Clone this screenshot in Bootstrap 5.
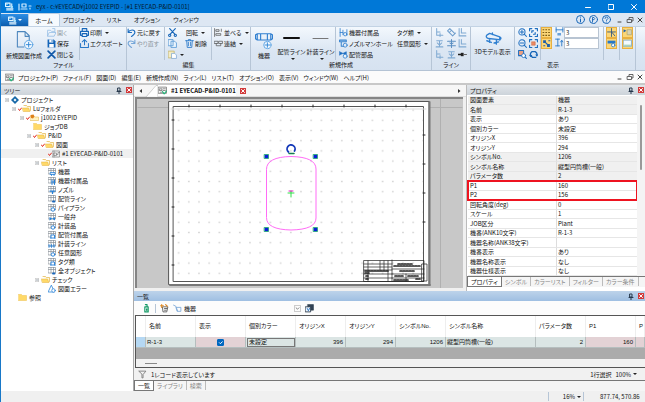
<!DOCTYPE html>
<html lang="ja">
<head>
<meta charset="utf-8">
<meta name="viewport" content="width=device-width, initial-scale=1">
<title>eyx - EYECAD-P&amp;ID-0101</title>
<link href="https://cdn.jsdelivr.net/npm/bootstrap@5.3.0/dist/css/bootstrap.min.css" rel="stylesheet">
<style>
body{font-family:"Noto Sans CJK JP",sans-serif;font-feature-settings:"palt";font-size:7px;line-height:9px;color:#111;background:#f0f0f0;white-space:nowrap;overflow-x:hidden}
button,input,select{font:inherit;font-feature-settings:inherit;color:inherit}
.app{min-height:100vh;border-left:1px solid #1878c8}
.f6{font-size:6px}
svg{flex:none;fill:none;stroke-linecap:round;stroke-linejoin:round}
.ic{width:9px;height:9px}
.ttl{background:#0078d7;height:13px;color:#06182c}
.wbtn{background:none;border:0;padding:0;width:23px;height:13px;color:#fff;display:flex;align-items:center;justify-content:center}
.mini{width:10px;color:#444}
.tabrow{background:#dde7f3;height:13px}
.tabrow .nav-link{padding:0;border:0;border-radius:0;height:13px;line-height:14px;color:#111;text-align:center}
.tabrow .nav-link.active{background:#f6fafe;border:1px solid #b9cde2;border-bottom:0;border-radius:2px 2px 0 0}
.rb{background:none;border:0;padding:0;display:flex;align-items:center;gap:1px;line-height:10px;border-radius:0}
.rb:disabled{color:#8d979f;opacity:1}
.rb:disabled svg{opacity:.55}
.appbtn{width:27px;height:12px;background:linear-gradient(#2d8fe6,#0c5dae)}
.ribbon{background:linear-gradient(#f3f8fd,#dbe6f3 55%,#d6e2f0);height:45px;border-top:1px solid #c3d3e4;border-bottom:1px solid #b4c3d4}
.grp{border-right:1px solid #b6c5d6;display:flex;flex-direction:column}
.grp-body{display:flex;height:33px}
.grp-name{text-align:center;line-height:10px}
.stk{display:grid;grid-template-rows:repeat(3,11px);align-items:center}
.tri{display:grid;grid-template-columns:repeat(3,1fr);grid-template-rows:repeat(3,11px);align-items:center}
.sep{border-right:1px solid #b6c5d6}
.sepl{border-left:1px solid #b6c5d6}
.pl2{padding-left:2px}.pr2{padding-right:2px}.pl3{padding-left:3px}.pr3{padding-right:3px}
.car::after{content:"";border:2px solid transparent;border-top-color:#222;border-bottom:0;margin-left:2px}
.big{flex-direction:column;justify-content:flex-start;gap:1px}
.rb.on{background:#fbd678;border:1px solid #e8b040;width:11px;height:11px;justify-content:center}
.num{width:35px;height:11px;border:1px solid #b8c4d2;padding:0 1px;background:#fff;font-size:6px}
.w18{width:18px}.w26{width:26px}.w29{width:29px}.w32{width:32px}.w33{width:33px}.w34{width:34px}.w38{width:38px}.w44{width:44px}.w46{width:46px}.w62{width:62px}
.menubar{background:#fbfbfb;height:12px}
.menubar a{color:#111;text-decoration:none}
.menubar ul{display:flex;list-style:none;margin:0;padding:0;gap:5px}
.strip{height:2px;background:#c8c8c8}
.pane-h{height:10px;background:linear-gradient(#e2e6ea,#ccd3da);padding:0 1px 0 3px}
.pane-h.act{background:linear-gradient(#bdd3ea,#9fbfe2)}
.cls{background:#d23b3b;border:0;padding:0;width:6px;height:6px;display:flex}
.pin{background:none;border:0;padding:0;width:6px;height:7px;display:flex}
.side{width:133px;background:#fff;border-right:1px solid #aaa}
.tree{list-style:none;margin:0;padding:0}
.tree li{height:9px;display:flex;align-items:center;gap:2px}
.tree .ic{width:8px;height:8px}
.tree .box{width:4px;height:4px}
.tree .tk{width:4px;height:4px;margin-right:-2px}
.tree .fold{width:9px;height:7px}
.d0{padding-left:4px}.d1{padding-left:11px}.d2{padding-left:19px}.d2f{padding-left:32px}.d3{padding-left:26px}.d4{padding-left:34px}.d5{padding-left:47px}.d0f{padding-left:17px}
.sel{background:#f0f0f0}
.gutter{width:2px;background:#dcdcdc}
.doc-tabs{height:12px;background:#f6f6f6;border-bottom:1px solid #ddd}
.doc-tab{font-size:6px;font-weight:700;background:#fff;border:0;padding:0;height:11px}
.view{background:#c8c8c8;border:2px solid #858585;border-right:0;border-bottom:0;margin:0 3px 3px 1px;min-height:100px}
.view svg{position:absolute;inset:0;width:100%;height:100%}
.props{width:179px;background:#fff;border-left:1px solid #bbb}
.ptab{width:169px;table-layout:fixed;border-collapse:separate;border-spacing:0;margin:1px 0 0 1px}
.ptab tr{height:9px}
.ptab tr.t{height:10px}
.ptab th,.ptab td{font-weight:400;padding:0 0 0 2px;border-bottom:1px solid #e6e6e6;line-height:8px;overflow:hidden}
.ptab th{width:88px}
.ptab td{border-left:1px solid #ddd;padding-left:1px}
.ptab .ro{background:#f0f0f0}
.mk{outline:2px solid #ee1320;outline-offset:-1px}
.sbar{width:8px;background:#f4f4f4}
.thumb{width:2px;height:65px;background:#999;margin:10px auto 0;border-radius:1px}
.btabs{height:11px;background:#f5f5f5;border-top:1px solid #777}
.btabs button{background:none;border:0;padding:0 3px;line-height:9px;color:#858585;border-right:1px solid #bbb;height:9px}
.btabs button.cur{background:#fff;color:#111;border:1px solid #777;border-top:0;height:10px}
.tools{height:14px;background:#fcfcfc}
.pick{width:118px;height:11px;border:0;padding:0;background:transparent;appearance:none}
.pick-arrow{width:7px;height:7px;border:1px solid #ccc;margin-left:-8px;pointer-events:none}
.grid-wrap{background:#ababab;border:1px solid #555;border-right:0;margin-left:1px}
.gtab{width:100%;table-layout:fixed;border-collapse:separate;border-spacing:0;font-family:"Liberation Sans","Noto Sans CJK JP",sans-serif;font-size:6px}
.gtab th{height:21px;background:#fff;font-weight:400;padding:0 3px;border-right:1px solid #eee}
.gtab td{height:11px;background:#dbe5e4;padding:0 2px 0 1px;border-right:1px solid #b5bebe;border-bottom:1px solid #b5bebe;line-height:9px;overflow:hidden}
.gtab td.pk{background:#e3d2d5}
.gtab td.hd{background:#b5d8f3}
.gtab td.fc{outline:1px solid #777;outline-offset:-2px;padding-left:3px}
.gtab .form-check-input{width:7px;height:7px;margin:0 auto;display:block;float:none;border-radius:1px;border-color:#0067c0;background-color:#0067c0;background-size:6px}
.c11{width:10px}.c50{width:50px}.c90{width:90px}
.hs{height:8px;background:#f2f2f2;margin-top:11px;padding:4px 0 0 9px}
.hs i{display:block;width:12px;height:1px;background:#888}
.foot{height:12px;background:#f1f1f1}
.stat{height:11px;background:#f0f0f0}
.zoomv{width:36px;justify-content:flex-end}
.coord{width:53px}
</style>
</head>
<body>
<svg width="0" height="0" class="position-absolute">
<defs>
<symbol id="logo" viewBox="0 0 16 16"><path d="M1 2h8v6H1zM3 11h11M3 14h11M12 3v6" stroke="#e4f5ff" stroke-width="2"/><path d="M2 3h3v2H2zM10 7h4v3h-4z" fill="#a9e6ff"/></symbol>
<symbol id="open" viewBox="0 0 16 16"><path d="M1 14V4h5l2 2h6v2M1 14l3-6h12l-3 6zM10 1h4v4" stroke="#5a9ad8" stroke-width="1.5"/></symbol>
<symbol id="save" viewBox="0 0 16 16"><path d="M1 1h11l3 3v11H1z" fill="#1565b8"/><path d="M4 1h7v5H4zM4 9h8v6H4z" fill="#fff"/><path d="M8 2h2v3H8z" fill="#1565b8"/></symbol>
<symbol id="x" viewBox="0 0 16 16"><path d="M2 2l12 12M14 2L2 14" stroke="#1058a8" stroke-width="3"/></symbol>
<symbol id="print" viewBox="0 0 16 16"><path d="M4 6V1h8v5M4 13H1V6h14v7h-3M4 10h8v5H4z" stroke="#1565b8" stroke-width="2"/></symbol>
<symbol id="export" viewBox="0 0 16 16"><path d="M8 10V1M4 5l4-4 4 4M1 8v7h14V8" stroke="#2878c8" stroke-width="1.8"/></symbol>
<symbol id="undo" viewBox="0 0 16 16"><path d="M2 2v6h6M2 8c3-6 12-6 12 0 0 3-3 5-6 7" stroke="#1f6fc0" stroke-width="2"/></symbol>
<symbol id="redo" viewBox="0 0 16 16"><path d="M14 2v6H8M14 8C11 2 2 2 2 8c0 3 3 5 6 7" stroke="#1f6fc0" stroke-width="2"/></symbol>
<symbol id="cut" viewBox="0 0 16 16"><path d="M3 1l9 10M13 1L4 11" stroke="#1565b8" stroke-width="2"/><circle cx="3" cy="13" r="2" stroke="#1565b8" stroke-width="2"/><circle cx="13" cy="13" r="2" stroke="#1565b8" stroke-width="2"/></symbol>
<symbol id="copy" viewBox="0 0 16 16"><path d="M1 1h8v11H1zM6 4h6l3 3v8H6z" stroke="#5b9ad5" fill="#eaf4fd" stroke-width="1.5"/></symbol>
<symbol id="paste" viewBox="0 0 16 16"><path d="M1 2h10v12H1z" stroke="#c9b871" fill="#f5ecc2" stroke-width="1.5"/><path d="M7 6h5l3 3v6H7z" stroke="#8ab0d8" fill="#fff" stroke-width="1.5"/></symbol>
<symbol id="trash" viewBox="0 0 16 16"><path d="M1 3h14M6 3V1h4v2M3 3l1 12h8l1-12M6 6v6M10 6v6" stroke="#2878c8" stroke-width="1.5"/></symbol>
<symbol id="align" viewBox="0 0 16 16"><path d="M1 1v14M4 3h5v3H4zM4 10h8v3H4zM13 2v4" stroke="#555" stroke-width="1.3"/></symbol>
<symbol id="chain" viewBox="0 0 16 16"><path d="M1 4h6v4H1zM9 4h6v4H9zM4 8v4h8V8" stroke="#555" stroke-width="1.3"/></symbol>
<symbol id="newdoc" viewBox="0 0 32 32"><path d="M4 1h13l7 7v9M4 1v26h11M17 1v8h7" stroke="#4c86bd" stroke-width="1.8"/><circle cx="23" cy="23" r="7" fill="#f2f8fe" stroke="#58a2e2" stroke-width="1.6"/><path d="M19 23h8M23 19v8" stroke="#2f86d6" stroke-width="1.6"/></symbol>
<symbol id="equip" viewBox="0 0 32 32"><path d="M4 4h24v11H4zM1 6v7M31 6v7M1 6l3-2M1 13l3 2M31 6l-3-2M31 13l-3 2M10 4v11M22 4v11" stroke="#2f7fd0" stroke-width="2"/><circle cx="22" cy="24" r="6.5" fill="#f2f8fe" stroke="#58a2e2" stroke-width="1.6"/><path d="M18 24h8M22 20v8" stroke="#2f86d6" stroke-width="1.6"/></symbol>
<symbol id="fit1" viewBox="0 0 16 16"><path d="M2 1v14M2 8h5M7 4v8M14 3v10" stroke="#3582cf" stroke-width="1.5"/><circle cx="11" cy="11" r="3" stroke="#3582cf" stroke-width="1.5"/></symbol>
<symbol id="fit2" viewBox="0 0 16 16"><path d="M1 2h12v3H1zM4 5v8h4" stroke="#3582cf" stroke-width="1.8"/><circle cx="11" cy="11" r="3.5" stroke="#3582cf" stroke-width="1.5"/></symbol>
<symbol id="fit3" viewBox="0 0 16 16"><path d="M1 3l12 6V3L1 9z" fill="#1c6dc0" stroke="#1c6dc0"/><circle cx="11" cy="11" r="3.5" fill="#e8f2fc" stroke="#3582cf" stroke-width="1.5"/></symbol>
<symbol id="l1" viewBox="0 0 16 16"><path d="M3 1v12h11M3 7h6M9 10v5" stroke="#7fa9d2" stroke-width="1.8"/></symbol>
<symbol id="l2" viewBox="0 0 16 16"><path d="M1 5l9 9 5-5M1 5l4-4 9 9M8 4l-4 4" stroke="#6d9dcc" stroke-width="1.8"/></symbol>
<symbol id="l3" viewBox="0 0 16 16"><path d="M2 1v13h12M6 1v8h8" stroke="#7fa9d2" stroke-width="1.8"/></symbol>
<symbol id="l4" viewBox="0 0 16 16"><path d="M2 14h12M8 14V3M3 3h10M4 7l4 4 4-4" stroke="#7fa9d2" stroke-width="1.8"/></symbol>
<symbol id="l5" viewBox="0 0 16 16"><path d="M1 4h14M1 12h14M8 1v14M5 7l3 2 3-2" stroke="#5b8fc2" stroke-width="1.8"/></symbol>
<symbol id="l6" viewBox="0 0 16 16"><path d="M0 8h5" stroke="#222" stroke-width="3"/><path d="M5 5h5v6H5z" fill="#222"/><path d="M10 8h5" stroke="#666" stroke-width="2"/></symbol>
<symbol id="model" viewBox="0 0 32 24"><path d="M5 6l5-3 18 6c3 1 3 5-1 5L8 12c-4-1-5-4-3-6zM10 12v7M22 14v8M15 5V2M28 9v6M5 16l8 3M18 20l8-2" stroke="#2f7fd0" stroke-width="2.4"/></symbol>
<symbol id="zin" viewBox="0 0 16 16"><circle cx="7" cy="7" r="5.5" stroke="#1f6fc0" stroke-width="1.8"/><path d="M11 11l4 4M4 7h6M7 4v6" stroke="#1f6fc0" stroke-width="1.8"/></symbol>
<symbol id="zout" viewBox="0 0 16 16"><circle cx="7" cy="7" r="5.5" stroke="#1f6fc0" stroke-width="1.8"/><path d="M11 11l4 4M4 7h6" stroke="#1f6fc0" stroke-width="1.8"/></symbol>
<symbol id="zfit" viewBox="0 0 16 16"><path d="M1 5V1h4M11 1h4v4M15 11v4h-4M5 15H1v-4M5 5h3M5 5v3M11 11H8M11 11V8" stroke="#1f6fc0" stroke-width="2"/></symbol>
<symbol id="zsel" viewBox="0 0 16 16"><path d="M1 5V1h4M11 1h4v4M15 11v4h-4M5 15H1v-4" stroke="#1f6fc0" stroke-width="2"/><path d="M5 5h6v6H5z" fill="#e88c66" stroke="#d46038"/></symbol>
<symbol id="zwin" viewBox="0 0 16 16"><path d="M1 1h9v9H1z" fill="#eba082" stroke="#1f6fc0" stroke-width="1.8"/><circle cx="10" cy="10" r="3.5" fill="#fff" stroke="#1f6fc0" stroke-width="1.5"/><path d="M13 13l2 2" stroke="#1f6fc0" stroke-width="2"/></symbol>
<symbol id="spin" viewBox="0 0 16 16"><path d="M3 10a6 6 0 0 1 2-7M6 3h5a6 6 0 0 1 3 7M12 13H6l-3-3" stroke="#1766b8" stroke-width="2.4"/><path d="M0 9h6l-3 4zM11 8h5l-2 4z" fill="#1766b8"/></symbol>
<symbol id="gridi" viewBox="0 0 16 16"><path d="M2 3h12M2 8h12M2 13h12" stroke="#7a5a10" stroke-width="2" stroke-dasharray="1 4" stroke-linecap="square"/></symbol>
<symbol id="snap" viewBox="0 0 16 16"><path d="M2 2h5v5H2zM9 9h5v5H9z" fill="#1f5fa8"/><path d="M5 5l7 7M12 3h2M3 12h2" stroke="#1f5fa8" stroke-width="2"/></symbol>
<symbol id="sx" viewBox="0 0 16 16"><path d="M2 1v8M14 1v8M2 5h12M5 12h5M5 14h5" stroke="#2878c8" stroke-width="1.6"/></symbol>
<symbol id="sy" viewBox="0 0 16 16"><path d="M1 2h7M1 14h7M5 2v12M12 5v9M10 7l2-3 2 3" stroke="#2878c8" stroke-width="1.6"/></symbol>
<symbol id="cur" viewBox="0 0 16 16"><path d="M8 1v14M1 7h14M9 8l5 6" stroke="#375a80" stroke-width="1.6"/></symbol>
<symbol id="tag" viewBox="0 0 16 16"><path d="M1 3h14v5H1z" fill="#2878c8"/><circle cx="11" cy="11" r="3" fill="#fff" stroke="#2878c8" stroke-width="1.5"/></symbol>
<symbol id="pan" viewBox="0 0 16 16"><path d="M1 2l5 3-5 3z" fill="#1f5fa8"/><path d="M8 3h7v9H8z" fill="#d9d3b4" stroke="#9a9a70"/></symbol>
<symbol id="pan2" viewBox="0 0 16 16"><path d="M1 2h14v11H1z" fill="#f4fbff" stroke="#7faacb" stroke-width="1.5"/><path d="M2 10h12v3H2z" fill="#a9d4ba"/></symbol>
<symbol id="doc" viewBox="0 0 16 16"><path d="M1 2h14v11H1zM3 5h4v3H3zM9 5h4M9 8h4M4 11h4" stroke="#666" stroke-width="1.3"/><path d="M8 10l3 4 4-5" stroke="#26b47a" stroke-width="2"/></symbol>
<symbol id="dwg" viewBox="0 0 16 16"><path d="M1 2h14v12H1zM4 2v12M4 6h5v5H4zM9 9h3V5h3" stroke="#777" stroke-width="1.2"/></symbol>
<symbol id="proj" viewBox="0 0 16 16"><path d="M8 0l8 8-8 8-8-8z" fill="#1668a8"/><path d="M8 5l3 3-3 3-3-3z" fill="#fff"/></symbol>
<symbol id="box" viewBox="0 0 8 8"><path d="M.5.5h7v7h-7z" fill="#fff" stroke="#999"/><path d="M2 4h4" stroke="#345"/></symbol>
<symbol id="tick" viewBox="0 0 8 8"><path d="M1 4l2 3 4-5" stroke="#e0261c" stroke-width="2"/></symbol>
<symbol id="fo" viewBox="0 0 18 14"><path d="M4 1h5l2 2h6v8" fill="#fff8dc" stroke="#e0ae3a" stroke-width="1.3"/><path d="M1 6h12l3 7H3z" fill="#ffd968" stroke="#e3b03c"/></symbol>
<symbol id="fc" viewBox="0 0 18 14"><path d="M1 1h6l2 2h8v10H1z" fill="#ffd968" stroke="#ecc04e"/></symbol>
<symbol id="fp" viewBox="0 0 18 14"><path d="M1 4h6l2 2h8v7H1z" fill="#fff3c2" stroke="#e0ae3a"/><path d="M1 2l6-1 2 4-3 4-4-1z" fill="#dd8119"/></symbol>
<symbol id="tb" viewBox="0 0 16 16"><path d="M1 1h14v11H1zM1 5h14M6 1v11M11 1v11" stroke="#808890" stroke-width="1.3"/></symbol>
<symbol id="t1" viewBox="0 0 16 16"><use href="#tb"/><path d="M5 9h9v4H5zM7 13v3M12 13v3" fill="#d7ecff" stroke="#2680d8" stroke-width="1.5"/></symbol>
<symbol id="t2" viewBox="0 0 16 16"><use href="#tb"/><path d="M8 6v9M13 6v9M8 10h5" stroke="#2680d8" stroke-width="2"/></symbol>
<symbol id="t3" viewBox="0 0 16 16"><use href="#tb"/><path d="M4 10h10M9 10v6" stroke="#2680d8" stroke-width="2.5"/></symbol>
<symbol id="t4" viewBox="0 0 16 16"><use href="#tb"/><path d="M10 13h3" stroke="#1a68bc" stroke-width="4"/></symbol>
<symbol id="t5" viewBox="0 0 16 16"><use href="#tb"/><circle cx="10" cy="11" r="3.5" fill="#fff" stroke="#2680d8" stroke-width="1.8"/></symbol>
<symbol id="t6" viewBox="0 0 16 16"><use href="#tb"/><path d="M3 8l11 7V8L3 15z" fill="#2680d8"/></symbol>
<symbol id="t7" viewBox="0 0 16 16"><use href="#tb"/><path d="M5 14h10M6 14V8h7v6" fill="#fff" stroke="#2680d8" stroke-width="1.8"/></symbol>
<symbol id="t8" viewBox="0 0 16 16"><use href="#tb"/><path d="M2 15V9M7 15V9M12 15V9M2 12h12" stroke="#2680d8" stroke-width="1.5"/></symbol>
<symbol id="warn" viewBox="0 0 16 16"><path d="M7 1l6 13H1z" stroke="#2d85d8" stroke-width="1.6"/><circle cx="11" cy="11" r="3.5" fill="#fff" stroke="#2d85d8" stroke-width="1.5"/></symbol>
<symbol id="pin" viewBox="0 0 6 7"><path d="M2 1h2v3H2zM1 4.5h4M3 5v2" stroke="#26384c"/></symbol>
<symbol id="cx" viewBox="0 0 6 6"><path d="M1.5 1.5l3 3M4.5 1.5l-3 3" stroke="#fff"/></symbol>
<symbol id="mn" viewBox="0 0 8 8"><path d="M2 6h3" stroke="currentColor"/></symbol>
<symbol id="rs" viewBox="0 0 8 8"><path d="M1.5 3.5h4v3h-4zM3 3V1.500h4V5H6" stroke="currentColor" stroke-width=".8"/></symbol>
<symbol id="cl" viewBox="0 0 8 8"><path d="M2 2l4 4M6 2L2 6" stroke="currentColor"/></symbol>
<symbol id="i1" viewBox="0 0 16 16"><path d="M5 5h6v9H5zM6 1h3v4" stroke="#159a66" stroke-width="2"/><path d="M7 8h3v4H7z" fill="#159a66"/></symbol>
<symbol id="i2" viewBox="0 0 16 16"><path d="M5 5h9l-2 9H6zM8 8h4M8 11h3" stroke="#555" stroke-width="1.5"/><path d="M3 1v5M1 3h5M10 1l3 3" stroke="#e08a24" stroke-width="2"/></symbol>
<symbol id="i3" viewBox="0 0 16 16"><path d="M1 2l4 2 3 8M6 6h8v7H8z" stroke="#7faad8" stroke-width="1.6"/></symbol>
<symbol id="i4" viewBox="0 0 16 16"><path d="M5 1h10v10H5z" fill="#345" stroke="#234"/><path d="M1 5h9v9H1z" fill="#eef6ff" stroke="#234" stroke-width="1.5"/><path d="M4 8l2 4 2-4" stroke="#1766b8" stroke-width="1.5"/></symbol>
<symbol id="fil" viewBox="0 0 16 16"><path d="M2 2h12L9 8v6H7V8z" stroke="#777" stroke-width="1.5"/></symbol>
</defs>
</svg>

<div class="app d-flex flex-column">
<header>
  <div class="ttl d-flex align-items-center ps-1">
    <svg class="ic"><use href="#logo"/></svg>
    <svg class="ms-1" width="14" height="10" viewBox="0 0 14 10"><path d="M1 2v6M4 2h4v3H4zM3 7h6M11 4h2M12 6v1" stroke="#cdeaff" stroke-width="1.2"/></svg>
    <span class="ms-1 f6">eyx - c:¥EYECAD¥j1002 EYEPID - [#1 EYECAD-P&amp;ID-0101]</span>
    <div class="ms-auto d-flex">
      <button class="wbtn" aria-label="最小化"><svg width="6" height="6"><path d="M.5 3.5h5" stroke="#fff"/></svg></button>
      <button class="wbtn" aria-label="最大化"><svg width="6" height="6"><path d="M.5.5h5v5h-5z" stroke="#fff"/></svg></button>
      <button class="wbtn" aria-label="閉じる"><svg width="6" height="6"><path d="M.5.5l5 5M5.5.5l-5 5" stroke="#fff"/></svg></button>
    </div>
  </div>
  <nav class="tabrow nav d-flex align-items-end flex-nowrap f6" aria-label="リボン">
    <button class="rb appbtn justify-content-center" aria-label="アプリケーション"><svg class="ic"><use href="#logo"/></svg><svg width="4" height="3"><path d="M0 0h4L2 2z" fill="#fff"/></svg></button>
    <a class="nav-link active w32 pl2" href="#">ホーム</a>
    <a class="nav-link w38" href="#">プロジェクト</a>
    <a class="nav-link w32" href="#">リスト</a>
    <a class="nav-link w34" href="#">オプション</a>
    <a class="nav-link w44" href="#">ウィンドウ</a>
    <div class="ms-auto d-flex align-items-center h-100">
      <div class="d-flex gap-1 me-1">
      <button class="rb" aria-label="情報"><svg class="ic" viewBox="0 0 9 9"><circle cx="4.5" cy="4.5" r="4" stroke="#1766b8"/><path d="M4.5 2v.2M4.5 4v3" stroke="#1766b8"/></svg></button>
      <button class="rb" aria-label="ライセンス"><svg class="ic" viewBox="0 0 9 9"><circle cx="4.5" cy="4.5" r="4" stroke="#1766b8"/><path d="M3.5 7V2.500h1.500q1.500 1 0 2.200H3.500" stroke="#1766b8" stroke-width=".9"/></svg></button>
      <button class="rb" aria-label="ヘルプ"><svg class="ic" viewBox="0 0 9 9"><circle cx="4.5" cy="4.5" r="4" stroke="#1766b8"/><path d="M3 3.500q0-1.500 1.500-1.500T6 3.500L4.500 5v.5M4.500 7v.1" stroke="#1766b8" stroke-width=".9"/></svg></button>
      </div>
      <button class="wbtn mini" aria-label="最小化"><svg width="8" height="8"><use href="#mn"/></svg></button>
      <button class="wbtn mini" aria-label="元のサイズ"><svg width="8" height="8"><use href="#rs"/></svg></button>
      <button class="wbtn mini" aria-label="閉じる"><svg width="8" height="8"><use href="#cl"/></svg></button>
    </div>
  </nav>
  <div class="ribbon d-flex">
    <section class="grp">
      <div class="grp-body">
        <button class="rb big w46 f6"><svg width="19" height="19" class="mt-1"><use href="#newdoc"/></svg>新規図面作成</button>
        <div class="stk w33 sep f6"><button class="rb" disabled><svg class="ic"><use href="#open"/></svg>開く</button><button class="rb"><svg class="ic"><use href="#save"/></svg>保存</button><button class="rb"><svg class="ic"><use href="#x"/></svg>閉じる</button></div>
        <div class="stk w46 f6"><button class="rb car"><svg class="ic"><use href="#print"/></svg>印刷</button><button class="rb"><svg class="ic"><use href="#export"/></svg>エクスポート</button></div>
      </div>
      <div class="grp-name f6">ファイル</div>
    </section>
    <section class="grp">
      <div class="grp-body">
        <div class="stk w38 sep f6"><button class="rb"><svg class="ic"><use href="#undo"/></svg>元に戻す</button><button class="rb" disabled><svg class="ic"><use href="#redo"/></svg>やり直す</button></div>
        <div class="stk w18 pl3"><button class="rb" aria-label="切り取り"><svg class="ic"><use href="#cut"/></svg></button><button class="rb" aria-label="コピー"><svg class="ic"><use href="#copy"/></svg></button><button class="rb car" aria-label="貼り付け"><svg class="ic"><use href="#paste"/></svg></button></div>
        <div class="stk w29 sep f6"><button class="rb car pl3">回転</button><button class="rb pl2"><svg class="ic"><use href="#trash"/></svg>削除</button></div>
        <div class="stk w38 f6 pl2"><button class="rb car"><svg class="ic"><use href="#align"/></svg>並べる</button><button class="rb car"><svg class="ic"><use href="#chain"/></svg>連結</button></div>
      </div>
      <div class="grp-name f6">編集</div>
    </section>
    <section class="grp">
      <div class="grp-body">
        <button class="rb big w26 f6"><svg width="18" height="19" class="mt-1"><use href="#equip"/></svg>機器</button>
        <button class="rb big car w29 f6"><svg width="17" height="15" class="mt-1"><path d="M1 7h15" stroke="#111" stroke-width="2"/></svg>配管ライン</button>
        <button class="rb big car w29 f6"><svg width="17" height="15" class="mt-1"><path d="M1 7.5h15" stroke="#777"/></svg>計装ライン</button>
        <div class="stk w62 f6 pl3 sepl"><button class="rb"><svg class="ic"><use href="#fit1"/></svg>機器付属品</button><button class="rb"><svg class="ic"><use href="#fit2"/></svg>ノズルマンホール</button><button class="rb"><svg class="ic"><use href="#fit3"/></svg>配管部品</button></div>
        <div class="stk w34 f6"><button class="rb car">タグ類</button><button class="rb car">任意図形</button></div>
      </div>
      <div class="grp-name f6">新規作成</div>
    </section>
    <section class="grp">
      <div class="tri w38 pl3">
        <button class="rb" aria-label="ライン編集1"><svg class="ic"><use href="#l1"/></svg></button><button class="rb" aria-label="ライン編集2"><svg class="ic"><use href="#l2"/></svg></button><button class="rb" aria-label="ライン編集3"><svg class="ic"><use href="#l3"/></svg></button>
        <button class="rb" aria-label="ライン編集4"><svg class="ic"><use href="#l4"/></svg></button><button class="rb" aria-label="ライン編集5"><svg class="ic"><use href="#l5"/></svg></button><button class="rb" aria-label="ライン編集6"><svg class="ic"><use href="#l3"/></svg></button>
        <button class="rb" aria-label="ライン編集7"><svg class="ic"><use href="#l1"/></svg></button><button class="rb" aria-label="ライン編集8"><svg class="ic"><use href="#l4"/></svg></button><button class="rb" aria-label="ライン編集9"><svg class="ic"><use href="#l6"/></svg></button>
      </div>
      <div class="grp-name f6">ライン</div>
    </section>
    <section class="grp">
      <div class="grp-body">
        <button class="rb big w44 f6 sep"><svg width="18" height="15" class="mt-1"><use href="#model"/></svg>3Dモデル表示</button>
        <div class="stk pl3"><button class="rb" aria-label="拡大"><svg class="ic"><use href="#zin"/></svg></button><button class="rb" aria-label="縮小"><svg class="ic"><use href="#zout"/></svg></button><button class="rb" aria-label="範囲拡大"><svg class="ic"><use href="#zwin"/></svg></button></div>
        <div class="stk pl2 pr2 sep"><button class="rb" aria-label="全体表示"><svg class="ic"><use href="#zfit"/></svg></button><button class="rb" aria-label="選択表示"><svg class="ic"><use href="#zsel"/></svg></button><button class="rb" aria-label="再表示"><svg class="ic"><use href="#spin"/></svg></button></div>
        <div class="stk"><button class="rb on" aria-label="グリッド"><svg class="ic"><use href="#gridi"/></svg></button><button class="rb on" aria-label="スナップ"><svg class="ic"><use href="#snap"/></svg></button></div>
        <div class="stk pl3 pr2"><div class="d-flex pr2"><svg class="ic me-0"><use href="#sx"/></svg><input class="num" aria-label="X間隔" value="3"></div><div class="d-flex"><svg class="ic"><use href="#sy"/></svg><input class="num" aria-label="Y間隔" value="3"></div></div>
        <div class="stk pl2 pr2 sepl"><button class="rb on" aria-label="カーソル"><svg class="ic"><use href="#cur"/></svg></button><button class="rb on" aria-label="タグ表示"><svg class="ic"><use href="#tag"/></svg></button></div>
        <div class="stk pl2 pr2 sepl"><button class="rb on" aria-label="ツリー表示"><svg class="ic"><use href="#pan"/></svg></button><button class="rb on" aria-label="一覧表示"><svg class="ic"><use href="#pan2"/></svg></button></div>
      </div>
      <div class="grp-name f6">表示</div>
    </section>
  </div>
  <nav class="menubar d-flex align-items-center ps-1 f6" aria-label="メニュー">
    <svg class="ic me-1"><use href="#doc"/></svg>
    <ul>
      <li><a href="#">プロジェクト(P)</a></li><li><a href="#">ファイル(F)</a></li><li><a href="#">図面(D)</a></li><li><a href="#">編集(E)</a></li><li><a href="#">新規作成(N)</a></li><li><a href="#">ライン(L)</a></li><li><a href="#">リスト(T)</a></li><li><a href="#">オプション(O)</a></li><li><a href="#">表示(V)</a></li><li><a href="#">ウィンドウ(W)</a></li><li><a href="#">ヘルプ(H)</a></li>
    </ul>
    <div class="ms-auto d-flex">
      <button class="wbtn mini" aria-label="最小化"><svg width="8" height="8"><use href="#mn"/></svg></button>
      <button class="wbtn mini" aria-label="元のサイズ"><svg width="8" height="8"><use href="#rs"/></svg></button>
      <button class="wbtn mini" aria-label="閉じる"><svg width="8" height="8"><use href="#cl"/></svg></button>
    </div>
  </nav>
  <div class="strip"></div>
</header>

<main class="d-flex flex-grow-1">
  <aside class="side flex-shrink-0">
    <div class="pane-h d-flex align-items-center f6">ツリー<button class="pin ms-auto me-1" aria-label="固定"><svg width="6" height="7"><use href="#pin"/></svg></button><button class="cls" aria-label="閉じる"><svg width="6" height="6"><use href="#cx"/></svg></button></div>
    <ul class="tree f6" id="tree"></ul>
  </aside>
  <div class="gutter"></div>
  <div class="d-flex flex-column flex-grow-1 overflow-hidden">
    <div class="d-flex flex-grow-1">
      <section class="d-flex flex-column flex-grow-1">
        <div class="doc-tabs d-flex align-items-center">
          <svg width="6" height="6" class="ms-1"><path d="M4 1v4L1.500 3z" fill="#333"/></svg>
          <svg width="14" height="12"><path d="M2 12L12 .5h2V12z" fill="#fff" stroke="#bbb" stroke-width=".7"/></svg>
          <button class="doc-tab d-flex align-items-center gap-1"><svg class="ic"><use href="#doc"/></svg>#1 EYECAD-P&amp;ID-0101</button>
          <button class="cls ms-1" aria-label="タブを閉じる"><svg width="6" height="6"><use href="#cx"/></svg></button>
          <svg width="6" height="6" class="ms-auto me-1"><path d="M2 1v4l2.500-2z" fill="#333"/></svg>
        </div>
        <div class="view position-relative flex-grow-1">
          <svg viewBox="0 0 324 189" preserveAspectRatio="xMidYMid meet">
            <defs><pattern id="dots" width="10.2" height="10.2" patternUnits="userSpaceOnUse" x="36" y="6"><path d="M4 4.500h1.200v1.200H4z" fill="#c4c4c4"/></pattern></defs>
            <path d="M302.5 0v189M0 8.500h324" stroke="#b0b0b0"/>
            <path d="M31 2.500h260v183H31z" fill="#fff" stroke="#555"/>
            <path d="M291.500 3v183M32 186h260" stroke="#777" stroke-width="2"/>
            <path d="M35.500 7.500h250v175h-250z" fill="#fff" stroke="#555"/>
            <path d="M36 8h249v174H36z" fill="url(#dots)"/>
            <path d="M33 10h255" stroke="#ddd"/>
            <path d="M51 6v2M82 6v2M113 6v2M144 6v2M175 6v2M206 6v2M237 6v2M268 6v2M34 21h2M34 50h2M34 79h2M34 108h2M34 137h2M34 166h2M285 36h2M285 65h2M285 94h2M285 123h2" stroke="#222"/>
            <path d="M128.500 70q0-12 24.500-12.500 25 .5 25 12.500v49q0 11.500-25 12-24.500-.5-24.500-12z" stroke="#ff6cf6"/>
            <g fill="#0b1fd8" stroke="#16b060" stroke-width=".7"><path d="M126.500 55.500h4v4h-4zM175.500 55.500h4v4h-4zM126.500 128.500h4v4h-4zM175.500 128.500h4v4h-4z"/></g>
            <path d="M150.500 53a4 4 0 1 1 6-1" stroke="#1438b8" stroke-width="1.800"/><path d="M151 54.500h5" stroke="#148050" stroke-width="1.500"/>
            <path d="M153 92v6M150 94h6" stroke="#30e048"/><path d="M151 92h4" stroke="#e818c8"/>
            <g stroke="#222" stroke-width=".7"><path d="M226 161.500h60v21h-60zM226 171h28M254 161v21M230 162v20M242 162v9M246 162v9M250 162v20M226 165h28M226 168h28M226 175h28M226 179h28M254 170h32M254 175h32M254 179h32M268 175v7M284 165h5v17h-5z"/><path d="M227 172h24M227 174h4M228 177h2M228 180h2M256 167h26M260 165h14M262 172h14M257 177h8M270 177h10M256 181h14M278 180h4" stroke-width="1.700" stroke-dasharray="2 1"/></g>
          </svg>
        </div>
      </section>
      <aside class="props flex-shrink-0 d-flex flex-column">
        <div class="pane-h d-flex align-items-center f6">プロパティ<button class="pin ms-auto me-1" aria-label="固定"><svg width="6" height="7"><use href="#pin"/></svg></button><button class="cls" aria-label="閉じる"><svg width="6" height="6"><use href="#cx"/></svg></button></div>
        <div class="d-flex flex-grow-1">
          <table class="ptab f6 mb-auto" id="props"></table>
          <div class="sbar"><div class="thumb"></div></div>
        </div>
        <div class="btabs d-flex f6 mb-1"><button class="cur">プロパティ</button><button>シンボル</button><button>カラーリスト</button><button>フィルター</button><button>カラー条件</button></div>
      </aside>
    </div>
    <section>
      <div class="pane-h act d-flex align-items-center f6">一覧<button class="pin ms-auto me-1" aria-label="固定"><svg width="6" height="7"><use href="#pin"/></svg></button><button class="cls" aria-label="閉じる"><svg width="6" height="6"><use href="#cx"/></svg></button></div>
      <div class="tools d-flex align-items-center ps-2 f6">
        <button class="rb pe-1 sep" aria-label="実行"><svg class="ic"><use href="#i1"/></svg></button>
        <button class="rb ms-1" aria-label="新規"><svg class="ic"><use href="#i2"/></svg></button>
        <button class="rb ms-1 pr2" aria-label="選択"><svg class="ic"><use href="#i3"/></svg></button>
        <select class="pick" aria-label="種類"><option>機器</option></select>
        <svg class="pick-arrow" viewBox="0 0 7 7"><path d="M1.500 2.500l2 2 2-2" stroke="#555"/></svg>
        <button class="rb ms-1" aria-label="出力"><svg class="ic"><use href="#i4"/></svg></button>
      </div>
      <div class="grid-wrap">
        <table class="gtab">
          <colgroup><col class="c11"><col class="c50"><col class="c50"><col class="c50"><col class="c50"><col class="c50"><col class="c50"><col class="c90"><col class="c50"><col class="c50"><col></colgroup>
          <thead><tr><th></th><th>名前</th><th>表示</th><th>個別カラー</th><th>オリジンX</th><th>オリジンY</th><th>シンボルNo.</th><th>シンボル名称</th><th>パラメータ数</th><th>P1</th><th>P</th></tr></thead>
          <tbody><tr><td class="hd"></td><td>R-1-3</td><td class="pk"><input class="form-check-input" type="checkbox" checked aria-label="表示"></td><td class="fc">未設定</td><td class="text-end">396</td><td class="text-end">294</td><td class="text-end">1206</td><td>縦型円筒槽(一般)</td><td class="text-end">2</td><td class="pk text-end">160</td><td class="pk"></td></tr></tbody>
        </table>
        <div class="hs"><i></i></div>
      </div>
      <div class="foot d-flex align-items-center f6"><svg class="ic mx-1"><use href="#fil"/></svg>1レコード表示しています<span class="ms-auto me-1">1行選択</span><span class="car me-2 d-flex align-items-center">100%</span></div>
      <div class="btabs d-flex f6"><button class="cur">一覧</button><button>ライブラリ</button><button>検索</button></div>
    </section>
  </div>
</main>
<footer class="stat d-flex align-items-center justify-content-end f6"><span class="zoomv car d-flex align-items-center sep sepl pr2 me-2">16%</span><span class="coord ps-2">877.74, 570.86</span></footer>
</div>
<script src="https://cdn.jsdelivr.net/npm/bootstrap@5.3.0/dist/js/bootstrap.bundle.min.js"></script>
<script>
const svg = (id, cls) => `<svg class="${cls}"><use href="#${id}"/></svg>`;
// [indent class, icon, label, flags: b = expander box, t = red tick]
const tree = [
  ['d0', 'proj', 'プロジェクト', 'b'], ['d1', 'fo', 'Luフォルダ', 'bt'], ['d2', 'fp', 'j1002 EYEPID', 'bt'],
  ['d2f', 'fc', 'ジョブDB', ''], ['d3', 'fo', 'P&amp;ID', 'bt'], ['d4', 'fo', '図面', 'bt'],
  ['d5 sel', 'dwg', '#1 EYECAD-P&amp;ID-0101', 't'], ['d4', 'fo', 'リスト', 'b'],
  ['d5', 't1', '機器', ''], ['d5', 't2', '機器付属品', ''], ['d5', 't3', 'ノズル', ''], ['d5', 't4', '配管ライン', ''],
  ['d5', 't5', 'パイプラン', ''], ['d5', 't6', '一般弁', ''], ['d5', 't5', '計装品', ''], ['d5', 't7', '配管付属品', ''],
  ['d5', 't8', '計装ライン', ''], ['d5', 't5', '任意図形', ''], ['d5', 't7', 'タグ類', ''], ['d5', 't4', '全オブジェクト', ''],
  ['d4', 'fo', 'チェック', 'b'], ['d5', 'warn', '図面エラー', ''], ['d0f', 'fc', '参照', '']
];
document.getElementById('tree').innerHTML = tree.map(([c, i, t, f]) =>
  `<li class="${c}">${f.includes('b') ? svg('box', 'box') : ''}${f.includes('t') ? svg('tick', 'tk') : ''}${svg(i, i[0] === 'f' ? 'fold' : 'ic')}<span>${t}</span></li>`).join('');
const props = [
  ['図面要素', '機器', 1], ['名前', 'R-1-3', 1], ['表示', 'あり'], ['個別カラー', '未設定'], ['オリジンX', '396'], ['オリジンY', '294'],
  ['シンボルNo.', '1206', 1], ['シンボル名称', '縦型円筒槽(一般)', 1], ['パラメータ数', '2', 1], ['P1', '160'], ['P2', '156'],
  ['回転角度(deg)', '0'], ['スケール', '1'], ['JOB区分', 'Plant'], ['機番(ANK10文字)', 'R-1-3'], ['機器名称(ANK38文字)', ''],
  ['機番表示', 'あり'], ['機器名称表示', 'なし'], ['機器仕様表示', 'なし']
];
const rows = props.map(([k, v, ro], i) =>
  `<tr class="${i % 2 ? 't' : ''}"><th scope="row" class="${ro ? 'ro' : ''}">${k}</th><td class="${ro ? 'ro' : ''}">${v}</td></tr>`);
document.getElementById('props').innerHTML =
  `<tbody>${rows.slice(0, 9).join('')}</tbody><tbody class="mk">${rows.slice(9, 11).join('')}</tbody><tbody>${rows.slice(11).join('')}</tbody>`;
</script>
</body>
</html>
